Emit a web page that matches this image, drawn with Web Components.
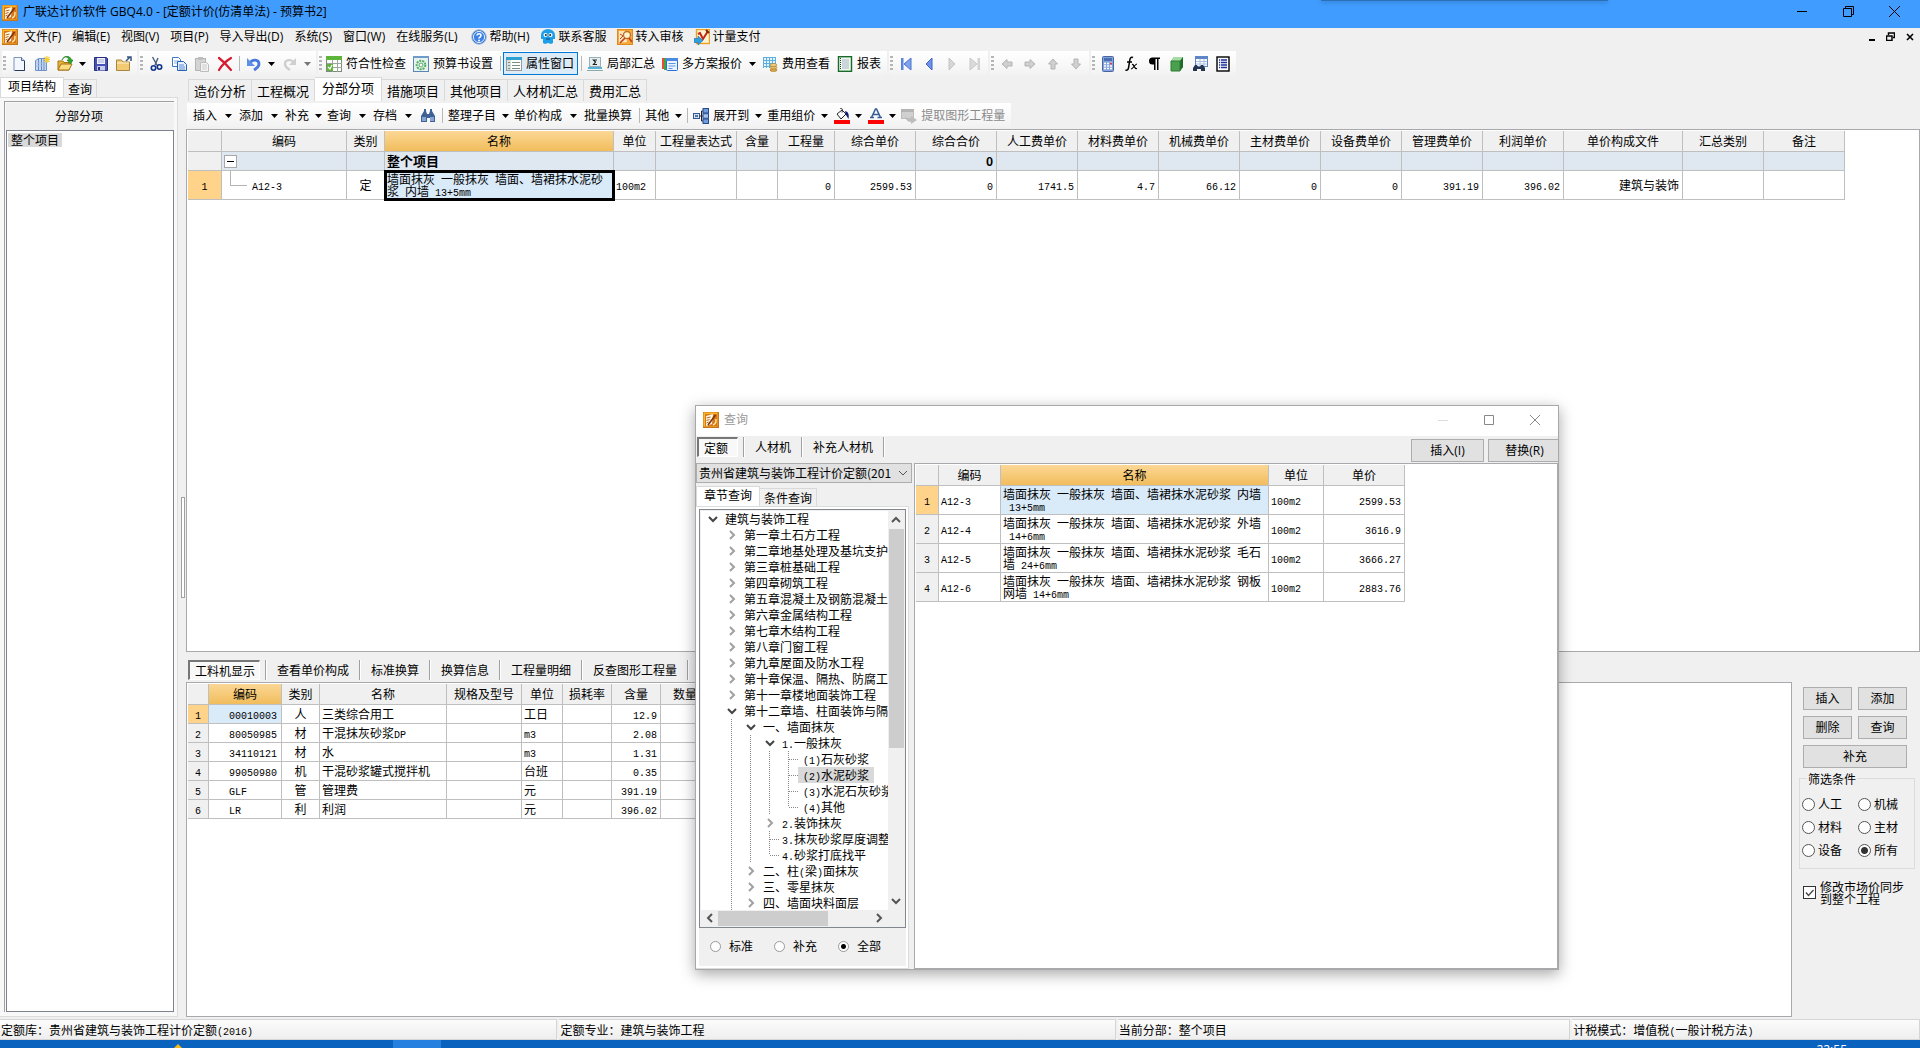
<!DOCTYPE html>
<html lang="zh-CN">
<head>
<meta charset="utf-8">
<title>广联达计价软件 GBQ4.0</title>
<style>
html,body{margin:0;height:100%;overflow:hidden}
body{font:12px/16px "Open Sans","Noto Sans CJK SC",sans-serif;color:#000;background:#f0f0f0}
</style>
</head>
<body>
<app-window></app-window>
<script>
const BASE = `
*{box-sizing:border-box}
:host{display:block}
:host([hidden]){display:none}
svg{display:block;flex:none}
button,select,input{font:inherit;color:inherit;margin:0}
.m{font-family:"Liberation Mono",monospace;font-size:10px;line-height:1px}
`;

/* Wraps runs of Latin characters so they take the narrow half-width face. */
const half = t => String(t).replace(/[&<>]/g, c => ({'&':'&amp;','<':'&lt;','>':'&gt;'}[c]))
  .replace(/[ -~\n]+/g, s => `<span class="m">${s}</span>`);

const define = (name, css, html, setup) => customElements.define(name, class extends HTMLElement {
  connectedCallback() {
    if (this.shadowRoot) return;
    const root = this.attachShadow({mode:'open'});
    const t = document.createElement('template');
    t.innerHTML = `<style>${BASE}${css}</style>` + (typeof html === 'function' ? html(this) : html);
    root.append(t.content.cloneNode(true));
    if (setup) setup(this, root);
  }
});

/* ---------- icons, 16 x 16 ---------- */
const ICONS = {
  app:'<rect x="0" y="0" width="16" height="16" fill="#c8741a"/><rect x="0.500" y="0.500" width="14" height="14" fill="#fbb829"/><rect x="2" y="2" width="12" height="12" fill="#d9761a"/><path d="M3 4l7-2-1 10-6 2z" fill="#fff8e6"/><path d="M3.500 6l4-1M3.500 8.500l3-1M3.500 11l2-1" stroke="#b4641c"/><path d="M5 13L12.500 3" stroke="#7c3408" stroke-width="1.500"/><path d="M10 13c3-1 3-3 3-6" stroke="#ffe9a8" stroke-width="1.400" fill="none"/>',
  help:'<circle cx="8" cy="8" r="7.3" fill="#2f6fd0" stroke="#a9bfe0"/><circle cx="8" cy="8" r="5.6" fill="#3c82e6" stroke="#e4eefc"/><path d="M6 6.6c0-2.6 4.2-2.4 4 0 0 1.500-2 1.400-2 3" stroke="#fff" stroke-width="1.600" fill="none"/><circle cx="8" cy="11.600" r="1" fill="#fff"/>',
  service:'<path d="M1 6a7 6 0 0 1 14 0v4h-2v4l-2 1-3-1-3 1-2-1v-4H1z" fill="#1f9fe8"/><circle cx="5.500" cy="6" r="2" fill="#fff"/><circle cx="10.500" cy="6" r="2" fill="#fff"/><circle cx="5.800" cy="6" r="1" fill="#123"/><circle cx="10.200" cy="6" r="1" fill="#123"/><path d="M6 10h4" stroke="#0b5f9c" stroke-width="1.300"/>',
  audit:'<rect x="0.500" y="0.500" width="15" height="15" fill="#f5a93a" stroke="#e08a1c"/><path d="M2 2h7l1 11-8 1z" fill="#fbe6bf"/><path d="M3 5l3 2-3 3" stroke="#c9401c" fill="none"/><circle cx="10" cy="6" r="3.500" fill="#fff1d0" stroke="#b9722a" stroke-width="1.300"/><path d="M8 9l-5 5M12 9l3 4" stroke="#c9401c" stroke-width="1.700"/>',
  pay:'<rect x="2.500" y="0.500" width="13" height="14" fill="#fff3d2" stroke="#f0a020" stroke-width="1.400"/><path d="M4 5l2-1 3 6 5-8" stroke="#c02818" stroke-width="2" fill="none"/><path d="M12 1l3 3" stroke="#7a2a10" stroke-width="2"/><path d="M0 9.500h4V7l5 4.500L4 16v-2.500H0z" fill="#2f9fdf" stroke="#1a6fae" stroke-width=".6"/>',
  file:'<path d="M3 1.500h7.500l3 3v10H3z" fill="#f3f8ff" stroke="#7d93b8"/><path d="M10.500 1.500v3h3" fill="#cfdcf0" stroke="#4f6894"/><path d="M13.500 5v9.500H4" stroke="#27395c" fill="none"/>',
  files:'<path d="M1.500 4.500l3-2h8v12h-11z" fill="#c6daf6" stroke="#6f93c8"/><path d="M4.500 3v11M7.500 3v11M10 3v11" stroke="#5f86c0"/><path d="M2 7h10M2 10h10" stroke="#a9c2e6"/><path d="M13 0v7M9.500 3.500H16M10.500 1l5 5M15.500 1l-5 5" stroke="#f2cd3c" stroke-width="1.200"/>',
  open:'<path d="M1 14V5h5l1 1.500h5V14z" fill="#e9b43a" stroke="#a67312"/><path d="M1 14l3-6h11l-3 6z" fill="#fbdc82" stroke="#a67312"/><path d="M5 4c2-4 6-4 7 0h-2l3.500 4L16 4h-1.500C13-1 7-1 5 4z" fill="#2ea82e" stroke="#137013" stroke-width=".6"/>',
  save:'<path d="M1.500 1.500h12l1 1v12h-13z" fill="#4a53b4" stroke="#272e80"/><rect x="4" y="2" width="8" height="6" fill="#eef0fb"/><path d="M5 4h6M5 6h6" stroke="#a9aed8"/><rect x="4" y="10" width="8" height="4.500" fill="#c8ccec"/><rect x="5" y="11" width="2" height="3" fill="#272e80"/>',
  folder:'<path d="M.5 14.500V4h5l1.500 2h6.500v8.500z" fill="#f0cb74" stroke="#a8873c"/><path d="M1 7h12" stroke="#fff3cd"/><path d="M10 5l4-4M11 1h4v4" stroke="#37527e" stroke-width="1.500" fill="none"/>',
  cut:'<path d="M4.500 1l5 9M10 2L7 9" stroke="#4b5d7e" stroke-width="1.400"/><circle cx="5.500" cy="12" r="2.200" fill="none" stroke="#10328c" stroke-width="1.600"/><circle cx="11.500" cy="11" r="2.200" fill="none" stroke="#10328c" stroke-width="1.600"/>',
  copy:'<path d="M1.500 1.500h6l2 2v7h-8z" fill="#fff" stroke="#3d78c4"/><path d="M3 5h5M3 7h5" stroke="#8fb2e2"/><path d="M6.500 5.500h6l3 3v6h-9z" fill="#e6f0ff" stroke="#2462b4"/><path d="M8 9h5M8 11h6M8 13h6" stroke="#5c8fd4"/>',
  paste:'<rect x="1.500" y="2.500" width="10" height="12" fill="#d4d4d4" stroke="#b4b4b4"/><rect x="4" y="1" width="5" height="3" fill="#bdbdbd"/><path d="M6.500 6.500h6l2 2v7h-8z" fill="#f4f4f4" stroke="#bcbcbc"/><path d="M8 9h5M8 11h5M8 13h5" stroke="#ccc"/>',
  del:'<path d="M2 2c4 3 8 7 12 12M14 2C9 5 5 9 2 14" stroke="#d61a30" stroke-width="2.200" fill="none" stroke-linecap="round"/>',
  undo:'<path d="M4 7c2-4 9-4 9 1 0 3-2 4-5 6" stroke="#4a7bdc" stroke-width="2.800" fill="none"/><path d="M1 2v8h8z" fill="#5e90ea"/>',
  redo:'<path d="M12 7c-2-4-9-4-9 1 0 3 2 4 5 6" stroke="#cfcfcf" stroke-width="2.400" fill="none"/><path d="M14 2v7H7z" fill="#cfcfcf"/>',
  check:'<rect x="0.500" y="0.500" width="15" height="15" fill="#fff" stroke="#7c8a7c"/><rect x="0" y="0" width="16" height="4" fill="#5fb53a"/><path d="M1 7.500h15M1 11.500h15M6.500 4v12M11.500 4v12" stroke="#9aa79a"/><rect x="1" y="8" width="6" height="7" fill="#5fb53a"/><path d="M2 11l2 2 2-4" stroke="#fff" fill="none" stroke-width="1.200"/>',
  gear:'<rect x="0.500" y="0.500" width="15" height="15" fill="#e6f3ea" stroke="#5c86b8"/><rect x="0" y="0" width="16" height="2" fill="#6f9bcc"/><circle cx="8" cy="9" r="4.300" fill="none" stroke="#54a868" stroke-width="2" stroke-dasharray="2 1"/><circle cx="8" cy="9" r="2" fill="#fff" stroke="#54a868"/>',
  props:'<rect x="0.500" y="1.500" width="15" height="13" fill="#fff" stroke="#9a9a9a"/><rect x="0" y="1" width="16" height="3" fill="#2f9fcf"/><rect x="1" y="4" width="4" height="10" fill="#d6e2da"/><path d="M2 6.500h2M2 9.500h2M2 12.500h2M6 6.500h8M6 9.500h8M6 12.500h8" stroke="#7b8f86"/>',
  sum:'<rect x="2.500" y="1.500" width="11" height="9" fill="#e4eef0" stroke="#9ab0b8"/><path d="M10 4H6.500L8.500 6 6.500 8.500H10" stroke="#222" fill="none" stroke-width="1.200"/><path d="M1 11h14v2H1z" fill="#58b2d8"/><path d="M0 14.500h16" stroke="#8aa"/>',
  plans:'<path d="M0 2h3v11H0z" fill="#e94b3c"/><path d="M2 2h3v12H2z" fill="#3aa84a"/><rect x="4.500" y="2.500" width="11" height="12" rx="1" fill="#eaf3ff" stroke="#2a6cd0"/><rect x="4" y="2" width="12" height="3" fill="#4c8ae2"/><path d="M6.500 7.500h7M6.500 10h7M6.500 12.500h4" stroke="#5c94e0"/>',
  cost:'<rect x="1" y="1" width="13" height="11" fill="#e6f3fc"/><path d="M1 1.500h13M1 4.500h13M1 7.500h13M1 10.500h13M1.500 1v11M4.500 1v11M7.500 1v11M10.500 1v11M13.500 1v11" stroke="#5eb0de"/><ellipse cx="11.500" cy="14" rx="3.500" ry="1.500" fill="#d9a548" stroke="#a87a28" stroke-width=".6"/><ellipse cx="11.500" cy="11.500" rx="3.500" ry="1.500" fill="#e7bd66" stroke="#a87a28" stroke-width=".6"/><ellipse cx="11.500" cy="9" rx="3.500" ry="1.500" fill="#f0cf86" stroke="#a87a28" stroke-width=".6"/>',
  report:'<rect x="1.500" y="0.700" width="13" height="14.600" fill="#eef6ee" stroke="#186a2a" stroke-width="1.400"/><path d="M5 4h7M5 6h7M5 8h7M5 10h7M5 12h7" stroke="#a6b8c6"/><path d="M3.500 2v12" stroke="#333" stroke-dasharray="1 1"/>',
  first:'<rect x="3" y="2" width="2.500" height="12" fill="#5b84e0"/><path d="M13 2v12L6 8z" fill="#7ea2f0" stroke="#4a70cc"/>',
  prev:'<path d="M11 2v12L5 8z" fill="#6d93ea" stroke="#3f66c4"/>',
  next:'<path d="M5 2v12l6-6z" fill="#d6d6d6" stroke="#c4c4c4"/>',
  last:'<rect x="10.500" y="2" width="2.500" height="12" fill="#d2d2d2"/><path d="M3 2v12l7-6z" fill="#dadada" stroke="#c8c8c8"/>',
  left:'<path d="M3 8l5-4.500V6h5v4H8v2.500z" fill="#d0d0d0" stroke="#b4b4b4"/>',
  right:'<path d="M13 8L8 3.500V6H3v4h5v2.500z" fill="#d0d0d0" stroke="#b4b4b4"/>',
  up:'<path d="M8 3l4.500 5H10v5H6V8H3.500z" fill="#d0d0d0" stroke="#b4b4b4"/>',
  down:'<path d="M8 13l4.500-5H10V3H6v5H3.500z" fill="#d0d0d0" stroke="#b4b4b4"/>',
  calc:'<rect x="2.500" y="0.500" width="11" height="15" rx="1" fill="#86a4dc" stroke="#4a649c"/><rect x="4" y="2" width="8" height="3" fill="#4a6cb0"/><path d="M4 7.500h8M4 10h8M4 12.500h8" stroke="#fff" stroke-width="1.500" stroke-dasharray="2 1"/><rect x="10" y="7" width="2" height="1.500" fill="#e03838"/>',
  fx:'<path d="M10 1.500c-2-1-3 .5-3.300 3L5.500 12c-.4 2-1.500 2.500-3 2M4 6h5" stroke="#000" stroke-width="1.500" fill="none"/><path d="M9 8.500c2-1 2 5 5 4M14 8c-2 0-4 5-6 5" stroke="#000" stroke-width="1.200" fill="none"/>',
  para:'<path d="M14 1.500H6.500a3.500 3.500 0 0 0 0 7H8V14h1.500V3H11v11h1.500V3H14z" fill="#000"/>',
  cube:'<path d="M2 5l3-4h9v10l-3 4H2z" fill="#4ba04e"/><path d="M2 5l3-4h9l-3 4z" fill="#a6dba4"/><path d="M11 5l3-4v10l-3 4z" fill="#1f6b28"/><path d="M2 5h9v10H2z" fill="none" stroke="#2c7c34"/>',
  findgrid:'<rect x="3.500" y="0.500" width="12" height="10" fill="#fff" stroke="#5e86c6"/><rect x="3" y="0" width="13" height="3" fill="#5e86c6"/><path d="M4 5.500h11M4 8h11M8 3v7M12 3v7" stroke="#a8c0e2"/><path d="M1 15v-3l2-3h2l1 2h2l1-2h2l2 3v3H9v-2H5v2z" fill="#22344e"/>',
  list:'<rect x="2" y="1" width="12" height="14" fill="#fff" stroke="#000" stroke-width="1.400"/><path d="M4 4h8M4 6.500h8M4 9h8M4 11.500h8" stroke="#1e2f9c" stroke-width="1.400"/><path d="M5.500 2v12" stroke="#fff" stroke-width=".8"/>',
  find:'<path d="M1 14V8l3-5V1h2v2l1 3h2l1-3V1h2v2l3 5v6h-5v-4H7v4z" fill="#3f6296"/><path d="M2 9h4v4H2zM10 9h4v4h-4z" fill="#86a6d2"/>',
  expand:'<rect x="0.500" y="5.500" width="6" height="5" fill="#dde9fa" stroke="#35578f"/><path d="M2 7l3 2M5 7L2 9" stroke="#35578f"/><path d="M7 8h3M8.500 3v10M8.500 3H10M8.500 13H10" stroke="#222" fill="none"/><rect x="10" y="0.500" width="5.500" height="4.500" fill="#6f9be0" stroke="#27488a"/><rect x="10" y="5.700" width="5.500" height="4.500" fill="#a6c3f0" stroke="#27488a"/><rect x="10" y="11" width="5.500" height="4.500" fill="#6f9be0" stroke="#27488a"/>',
  fill:'<path d="M3 6l5-4 4 4-5 5z" fill="#fff" stroke="#222"/><path d="M6 0.500c2-1 3 1 2 4" stroke="#222" fill="none"/><path d="M11 3c4 1 4 4 3.500 8L12 7z" fill="#101c7a"/><rect x="0" y="12" width="16" height="4" fill="#f00"/>',
  color:'<path d="M3.500 9.500L7.500 1h1l4 8.500M5 6.500h6M2 9.500h4M9.500 9.500h4.500" stroke="#3a5d96" stroke-width="1.600" fill="none"/><rect x="0" y="12" width="16" height="4" fill="#f00"/>',
  extract:'<rect x="0.500" y="1.500" width="12" height="9" fill="#d0d0d0" stroke="#bcbcbc"/><rect x="0" y="1" width="13" height="3" fill="#b4b4b4"/><path d="M4 7c1 3 3 4 6 4V8l6 4-6 4v-2c-4 0-6-3-6-7z" fill="#bdbdbd"/>'
};
define('ui-icon', ':host{width:16px;height:16px;flex:none}',
  h => `<svg width="16" height="16" viewBox="0 0 16 16" aria-hidden="true">${ICONS[h.getAttribute('name')]}</svg>`);

/* ---------- title bar and menus ---------- */
define('title-bar', `
:host{display:flex;align-items:center;height:28px;background:#409dff;padding:0 3px 6px 2px;position:relative;flex:none}
h1{font:inherit;margin:0 0 0 5px;flex:1;padding-top:2px}
ui-icon{margin-top:3px}
.flap{position:absolute;right:312px;top:0;width:287px;height:1px;background:#2c6fb4;box-shadow:0 1px 4px #1c4f8a}
button{width:46px;height:22px;border:0;background:none;padding:0;display:grid;place-items:center}`,
`<ui-icon name="app"></ui-icon><h1>广联达计价软件 GBQ4.0 - [定额计价(仿清单法) - 预算书2]</h1><div class="flap"></div>
<button aria-label="最小化"><svg width="10" height="10"><path d="M0 5.500h10" stroke="#000"/></svg></button>
<button aria-label="还原"><svg width="11" height="11"><path d="M.5 2.500h8v8h-8zM2.500 2.500v-2h8v8h-2" fill="none" stroke="#000"/></svg></button>
<button aria-label="关闭"><svg width="11" height="11"><path d="M0 0l11 11M11 0L0 11" stroke="#000"/></svg></button>`);

define('menu-bar', `
:host{display:flex;align-items:center;height:24px;padding:0 1px 7px 2px;flex:none}
nav{display:flex;flex:1;align-items:center;margin-left:1px}
button{border:0;background:none;padding:0 6px 0 5px;display:flex;align-items:center;gap:3px;white-space:nowrap;height:16px}
button.i{padding:0 3px 0 7px}
button.w{padding:0;width:19px;justify-content:center}`,
`<ui-icon name="app"></ui-icon><nav>${[['文件(F)'],['编辑(E)'],['视图(V)'],['项目(P)'],['导入导出(D)'],['系统(S)'],['窗口(W)'],['在线服务(L)'],['帮助(H)','help'],['联系客服','service'],['转入审核','audit'],['计量支付','pay']]
 .map(([t,i]) => `<button class="${i?'i':''}">${i?`<ui-icon name="${i}"></ui-icon>`:''}${t}</button>`).join('')}</nav>
<button class="w" aria-label="最小化窗口"><svg width="8" height="9"><path d="M1 8h6" stroke="#000" stroke-width="2"/></svg></button>
<button class="w" aria-label="还原窗口"><svg width="9" height="9"><path d="M0 4h6v4.500H.5V4M2.500 3V1h6v4.500H7" fill="none" stroke="#000" stroke-width="1.500"/></svg></button>
<button class="w" aria-label="关闭窗口"><svg width="8" height="8"><path d="M1 1l6 6M7 1L1 7" stroke="#000" stroke-width="1.600"/></svg></button>`);

/* ---------- toolbars ---------- */
define('tool-item', `
:host{display:flex;height:23px;align-items:center;flex:none}
button{display:flex;align-items:center;gap:4px;height:23px;border:0;background:none;padding:0 4px 0 3px;white-space:nowrap}
button.icon{width:23px;padding:0;justify-content:center}
button.on{border:1px solid #0078d7;background:#dcebf8;padding:0 3px 0 2px}
:host([off]) button{color:#8b8b8b}
.a{width:13px;padding:0;justify-content:center}
.a.wide{width:15px}
.a.tight{width:11px}`,
h => {
  const i = h.getAttribute('icon'), t = h.textContent.trim(), a = h.getAttribute('arrow');
  return `<button class="${t?'':'icon'} ${h.hasAttribute('pressed')?'on':''}" aria-label="${t||i}">${i?`<ui-icon name="${i}"></ui-icon>`:''}${t?`<span>${t}</span>`:''}</button>` +
  (a!==null?`<button class="a ${a}" aria-label="展开"><svg width="7" height="4"><path d="M0 0h7L3.500 4z" fill="${i==='redo'?'#777':'#000'}"/></svg></button>`:'');
});
define('tool-strip', `
:host{display:flex;align-items:center;height:25px;background:linear-gradient(#fff,#f6f6f6 70%,#f1f1f1);padding-right:2px;flex:none}
i{width:3px;height:15px;margin:0 1px;background:repeating-linear-gradient(#b4b4b4 0 2px,transparent 2px 4px)}
:host([plain]) i{display:none}`, '<i></i><slot></slot>');
define('tool-sep', ':host{width:1px;height:15px;background:#b8b8b8;margin:0 2px 0 3px;flex:none}', '');

/* ---------- page tabs and flat tabs ---------- */
define('page-tabs', `
:host{display:flex;align-items:flex-end;height:24px;font-family:"Noto Sans CJK SC",sans-serif;position:relative;z-index:1;flex:none}
button{height:22px;border:1px solid #d9d9d9;border-width:1px 1px 0 0;background:#f0f0f0;padding:0 5px;white-space:nowrap}
button:first-of-type{border-left-width:1px}
button[aria-selected=true]{height:24px;background:#fff;padding:0 7px 3px}
:host([large]) button{font-size:13px}
:host([small]){height:20px}
:host([small]) button{height:18px;line-height:14px;padding:0 4px}
:host([small]) button[aria-selected=true]{height:20px;padding:0 7px 4px}`,
h => { const s = h.getAttribute('selected');
  return h.getAttribute('items').split(',').map(t => `<button role="tab" aria-selected="${t===s}">${t}</button>`).join(''); });
define('flat-tabs', `
:host{display:flex;height:20px;font-family:"Noto Sans CJK SC",sans-serif;flex:none}
button{border:0;background:none;padding:0 10px 0 11px;white-space:nowrap;border-right:1px solid #a0a0a0;box-shadow:1px 0 #fff;height:20px}
button:first-of-type{border:2px solid #777;border-width:2px 1px 1px 2px;border-right-color:#fff;border-bottom-color:#fff;background:#f8f8f8;padding:0 4px 0 5px;margin-right:5px;min-width:41px;text-align:left;box-shadow:none;line-height:17px}
i{width:1px;background:#a0a0a0;box-shadow:1px 0 #fff}`,
h => { const [a,...r] = h.getAttribute('items').split(',');
  return `<button role="tab" aria-selected="true">${a}</button><i></i>` + r.map(t => `<button role="tab">${t}</button>`).join(''); });

/* ---------- data grid ---------- */
const GRIDS = {
  main:{
    widths:[34,125,38,229,42,81,41,57,81,81,81,81,81,81,81,81,81,119,81,81], hot:3,
    head:['','编码','类别','名称','单位','工程量表达式','含量','工程量','综合单价','综合合价','人工费单价','材料费单价','机械费单价','主材费单价','设备费单价','管理费单价','利润单价','单价构成文件','汇总类别','备注'],
    rows:[
      {cls:'sum', cells:['','@box','','整个项目','','','','','','0','','','','','','','','','','']},
      {cls:'tall', now:true, cells:['1','@leafA12-3','定','墙面抹灰 一般抹灰 墙面、墙裙抹水泥砂浆 内墙 13+5mm','100m2','','','0','2599.53','0','1741.5','4.7','66.12','0','0','391.19','396.02','建筑与装饰','','']}],
    align:['c','l','c','l','l','l','l','r','r','r','r','r','r','r','r','r','r','r','l','l'], sel:'box'
  },
  parts:{
    widths:[21,73,38,127,75,41,49,49,49], hot:1,
    head:['','编码','类别','名称','规格及型号','单位','损耗率','含量','数量'],
    rows:[['00010003','人','三类综合用工','','工日','','12.9'],['80050985','材','干混抹灰砂浆DP','','m3','','2.08'],['34110121','材','水','','m3','','1.31'],['99050980','机','干混砂浆罐式搅拌机','','台班','','0.35'],['GLF','管','管理费','','元','','391.19'],['LR','利','利润','','元','','396.02']]
      .map((r,i) => ({now:!i, cells:[i+1,...r,'']})),
    align:['c','in','c','l','l','l','l','r','r'], sel:'soft'
  },
  query:{
    widths:[23,62,268,55,81], hot:2, head:['','编码','名称','单位','单价'],
    rows:[['A12-3','内墙\n 13+5mm','2599.53'],['A12-4','外墙\n 14+6mm','3616.9'],['A12-5','毛石墙 24+6mm','3666.27'],['A12-6','钢板网墙 14+6mm','2883.76']]
      .map((r,i) => ({cls:'tall', now:!i, cells:[i+1,r[0],'墙面抹灰 一般抹灰 墙面、墙裙抹水泥砂浆 '+r[1],'100m2',r[2]]})),
    align:['c','l','l','l','r'], sel:'soft'
  }
};
define('data-grid', `
:host{border:1px solid #a9a9ad;background:#fff;padding:1px 0 0 1px;overflow:hidden;font-family:"Noto Sans CJK SC",sans-serif;min-width:0;min-height:0}
table{border-collapse:separate;border-spacing:0;table-layout:fixed}
th,td{padding:0 2px;border:1px solid #bfbfbf;border-width:0 1px 1px 0;font-weight:400;overflow:hidden;white-space:nowrap;line-height:12px}
th{height:21px;background:#f0f0f0;padding:0}
th.hot{background:linear-gradient(#fbd795,#f1bd5c)}
td{height:19px}
td.c{text-align:center}td.r{text-align:right;padding-right:3px}td.in{padding-left:20px}
tr.tall td{height:29px}
tr.sum td{background:#dfe7f1;font-weight:700;font-size:13px}
tr.sum .m{font-family:"Noto Sans CJK SC",sans-serif;font-size:12px}
td:first-child,tr.sum td:first-child{background:#f0f0f0}
tr.now td:first-child{background:#ffd38a}
td.text{white-space:pre-wrap}
td.soft,td.box{background:#d9eaf9}
td.box{outline:3px solid #000;outline-offset:-2px;overflow:visible;position:relative}
.toggle{display:block;width:13px;height:13px;border:1px solid #a8a8a8;background:linear-gradient(#000,#000) center/7px 1px no-repeat #fff;padding:0}
.leaf{display:flex;height:28px;gap:5px;align-items:center}
.leaf i{width:17px;height:15px;margin-left:6px;align-self:flex-start;border:1px solid #b4b4b4;border-width:0 0 1px 1px}`,
h => { const g = GRIDS[h.getAttribute('data')];
  const cell = (v,c,r) => {
    let k = g.align[c], body = half(v);
    if (v==='@box') body = '<button class="toggle" aria-label="折叠"></button>';
    else if (String(v).startsWith('@leaf')) body = `<div class="leaf"><i></i><span>${half(v.slice(5))}</span></div>`;
    if (c===g.hot) { if (r.cls==='tall') k += ' text'; if (r.now) k += ' '+g.sel; }
    return `<td class="${k}">${body}</td>`; };
  return `<table style="width:${g.widths.reduce((a,b)=>a+b)}px"><colgroup>${g.widths.map(w=>`<col style="width:${w}px">`).join('')}</colgroup>
  <thead><tr>${g.head.map((t,i)=>`<th class="${i===g.hot?'hot':''}">${t}</th>`).join('')}</tr></thead>
  <tbody>${g.rows.map(r=>`<tr class="${r.cls||''} ${r.now?'now':''}">${r.cells.map((v,c)=>cell(v,c,r)).join('')}</tr>`).join('')}</tbody></table>`; });

/* ---------- left project panel ---------- */
define('project-panel', `
:host{display:flex;flex-direction:column;width:178px;flex:none}
.frame{flex:1;min-height:0;border:1px solid #dcdcdc;border-left:0;background:#f8f8f8;padding:3px 3px 4px 4px;display:flex;flex-direction:column}
.in{flex:1;border:1px solid #a0a0a0;border-width:1px 0 0 1px;padding:1px 0 0 1px;display:flex;flex-direction:column;background:#f8f8f8}
h2{font:inherit;margin:0;height:27px;line-height:27px;text-align:center;background:#f0f0f0;padding-right:22px}
.list{flex:1;background:#fff;border:1px solid #7d828c;padding:1px;font-family:"Noto Sans CJK SC",sans-serif}
.list span{display:inline-block;background:#d9d9d9;padding:0 3px;line-height:14px}`,
`<page-tabs small items="项目结构,查询" selected="项目结构"></page-tabs>
<div class="frame"><div class="in"><h2>分部分项</h2><div class="list"><span>整个项目</span></div></div></div>`);

/* ---------- filter panel on the right ---------- */
const RADIO = `
input[type=radio]{appearance:none;width:13px;height:13px;border:1px solid #555;border-radius:50%;background:#fff;flex:none}
input[type=radio]:checked{background:radial-gradient(circle,#333 0 3px,#fff 4px)}
label{display:flex;align-items:center}`;
define('filter-panel', RADIO + `
:host{width:128px;flex:none;padding:5px 5px 0 7px;font-family:"Noto Sans CJK SC",sans-serif}
.b{display:grid;grid-template-columns:1fr 1fr;gap:6px;padding:0 8px 0 4px}
button{height:23px;border:1px solid #adadad;background:#e1e1e1;padding:0;line-height:18px}
.b :last-child{grid-column:1/3}
fieldset{margin:3px 0 0;border:1px solid #dcdcdc;padding:9px 0 10px 2px;display:grid;grid-template-columns:56px 1fr;row-gap:6px;height:98px;align-content:start}
legend{padding:0 1px;margin-left:5px}
fieldset label{gap:3px;height:17px}
.s{margin:12px 0 0 4px;gap:4px;line-height:12px}
input[type=checkbox]{appearance:none;width:13px;height:13px;border:1px solid #333;background:#fff;flex:none}
.tick{display:grid;flex:none}.tick>*{grid-area:1/1}.tick svg{pointer-events:none;z-index:1}`,
`<div class="b"><button>插入</button><button>添加</button><button>删除</button><button>查询</button><button>补充</button></div>
<fieldset><legend>筛选条件</legend>${['人工','机械','材料','主材','设备','所有'].map(t=>`<label><input type="radio" name="f" ${t==='所有'?'checked':''}>${t}</label>`).join('')}</fieldset>
<label class="s"><span class="tick"><input type="checkbox" checked><svg width="13" height="13"><path d="M3 6.500l2.500 3L10.500 4" fill="none" stroke="#444" stroke-width="1.300"/></svg></span><span>修改市场价同步<br>到整个工程</span></label>`);

/* ---------- chapter tree ---------- */
const TREE = [[0,'v','建筑与装饰工程'],[1,'>','第一章土石方工程'],[1,'>','第二章地基处理及基坑支护'],[1,'>','第三章桩基础工程'],[1,'>','第四章砌筑工程'],[1,'>','第五章混凝土及钢筋混凝土'],[1,'>','第六章金属结构工程'],[1,'>','第七章木结构工程'],[1,'>','第八章门窗工程'],[1,'>','第九章屋面及防水工程'],[1,'>','第十章保温、隔热、防腐工'],[1,'>','第十一章楼地面装饰工程'],[1,'v','第十二章墙、柱面装饰与隔'],[2,'v','一、墙面抹灰'],[3,'v','1.一般抹灰'],[4,'-','(1)石灰砂浆'],[4,'*','(2)水泥砂浆'],[4,'-','(3)水泥石灰砂浆'],[4,'L','(4)其他'],[3,'>','2.装饰抹灰'],[3,'-','3.抹灰砂浆厚度调整'],[3,'L','4.砂浆打底找平'],[2,'>','二、柱(梁)面抹灰'],[2,'>','三、零星抹灰'],[2,'>','四、墙面块料面层']];
const chev = (d,c='#555',w=2) => `<svg width="10" height="10"><path d="${{v:'M1 3l4 4 4-4','^':'M1 7l4-4 4 4','>':'M3 1l4 4-4 4','<':'M7 1L3 5l4 4'}[d]}" fill="none" stroke="${c}" stroke-width="${w}"/></svg>`;
define('chapter-tree', `
:host{display:grid;grid-template:minmax(0,1fr) 16px/minmax(0,1fr) 16px;border:1px solid #82868f;background:#f0f0f0;padding:1px;font-family:"Noto Sans CJK SC",sans-serif;overflow:hidden;min-height:0}
ul{margin:0;padding:0 0 0 2px;list-style:none;background:#fff;overflow:hidden}
li{display:flex;height:16px;line-height:16px;white-space:nowrap;align-items:center}
.g{width:19px;height:16px;flex:none;display:flex;align-items:center;justify-content:center}
.dot{background:repeating-linear-gradient(#888 0 1px,transparent 1px 2px) 9px 0/1px 100% no-repeat}
.h::after{content:"";width:9px;height:1px;margin-left:10px;background:repeating-linear-gradient(90deg,#888 0 1px,transparent 1px 2px)}
.end{background-size:1px 8px}
.t{padding:0 3px}
.d4 .t{padding:0 5px}
.t.sel{background:#d9d9d9}
.v,.x{display:flex;align-items:center;justify-content:space-between}
.v{flex-direction:column;padding:4px 0}.v i{width:15px;height:219px;background:#cdcdcd;margin:4px 0 auto}
.x{padding:0 4px}.x i{height:15px;width:110px;background:#cdcdcd;margin:0 auto 0 3px}`,
`<ul role="tree">${TREE.map(([d,k,t],n) => {
  let s = '';
  for (let j=0;j<d;j++) s += `<span class="g ${(j===1&&n>12)||(j===2&&n>13&&n<22)||(j===3&&n>14&&n<19)?'dot':''}"></span>`;
  s += k==='v'||k==='>' ? `<span class="g">${chev(k,k==='v'?'#444':'#a0a0a0')}</span>` : `<span class="g h dot ${k==='L'?'end':''}"></span>`;
  return `<li role="treeitem" class="d${d}">${s}<span class="t ${k==='*'?'sel':''}">${half(t)}</span></li>`; }).join('')}</ul>
<div class="v">${chev('^')}<i></i>${chev('v')}</div><div class="x">${chev('<')}<i></i>${chev('>')}</div>`);

/* ---------- query window ---------- */
define('query-window', RADIO + `
:host{display:flex;flex-direction:column;background:#f0f0f0;border:1px solid #a8a8a8;box-shadow:0 4px 14px rgba(0,0,0,.35);overflow:hidden}
header{height:30px;background:#fff;display:flex;align-items:center;padding:0 0 2px 7px;flex:none;color:#999}
header span{flex:1;margin-left:5px}
header button{width:46px;border:0;background:none;display:grid;place-items:center;padding:0}
.bar{display:flex;height:27px;padding:1px 0 0 1px;flex:none}
.acts{display:flex;gap:4px;margin-left:auto;margin-right:-3px;padding-top:2px}
.acts button{width:73px;height:23px;border:1px solid #adadad;background:#e1e1e1;padding:0}
.body{flex:1;display:flex;min-height:0}
.side{width:216px;margin-right:2px;display:flex;flex-direction:column;flex:none}
select{appearance:none;width:216px;height:20px;border:1px solid #adadad;border-radius:0;background:#e1e1e1;padding:0 20px 0 2px;font-family:"Noto Sans CJK SC",sans-serif;line-height:18px}
.sel{display:grid;margin-bottom:3px}.sel>*{grid-area:1/1}.sel svg{justify-self:end;align-self:center;margin-right:4px;pointer-events:none}
.page{flex:1;min-height:0;width:213px;border:1px solid #dcdcdc;border-left:0;background:#fff;padding:2px 2px 2px 3px;display:flex;flex-direction:column}
chapter-tree{flex:1}
.r{height:38px;background:#f0f0f0;display:flex;gap:19px;align-items:center;padding:0 0 2px 11px;flex:none;font-family:"Noto Sans CJK SC",sans-serif}
.r label{gap:8px;width:45px;white-space:nowrap}
.r input[type=radio]{width:11px;height:11px;border-color:#999}
.r input[type=radio]:checked{background:radial-gradient(circle,#000 0 2px,#fff 3px)}
data-grid{flex:1}`,
`<header><ui-icon name="app"></ui-icon><span>查询</span>
<button aria-label="最小化"><svg width="10" height="10"><path d="M0 5.500h10" stroke="#ddd"/></svg></button>
<button aria-label="最大化"><svg width="10" height="10"><path d="M.5.500h9v9h-9z" fill="none" stroke="#888"/></svg></button>
<button aria-label="关闭"><svg width="10" height="10"><path d="M0 0l10 10M10 0L0 10" stroke="#888"/></svg></button></header>
<div class="bar"><flat-tabs items="定额,人材机,补充人材机"></flat-tabs><div class="acts"><button>插入(I)</button><button>替换(R)</button></div></div>
<div class="body"><div class="side"><div class="sel"><select aria-label="定额库"><option>贵州省建筑与装饰工程计价定额(201</option></select>${chev('v','#555',1)}</div>
<page-tabs small items="章节查询,条件查询" selected="章节查询"></page-tabs>
<div class="page"><chapter-tree></chapter-tree><div class="r">${['标准','补充','全部'].map(t=>`<label><input type="radio" name="q" ${t==='全部'?'checked':''}>${t}</label>`).join('')}</div></div></div>
<data-grid data="query"></data-grid></div>`);

/* ---------- status bar and taskbar ---------- */
define('status-bar', `
:host{display:grid;grid-template-columns:558fr 557fr 453fr 348fr;gap:2px;height:21px;flex:none;font-family:"Noto Sans CJK SC",sans-serif}
div{border:1px solid #d5d5d5;border-left-width:0;background:linear-gradient(#fcfcfc,#eee);padding:0 1px;line-height:19px;white-space:nowrap;overflow:hidden}`,
['定额库：贵州省建筑与装饰工程计价定额(2016)','定额专业：建筑与装饰工程','当前分部：整个项目','计税模式：增值税(一般计税方法)'].map(t=>`<div>${half(t)}</div>`).join(''));
define('task-bar', `
:host{display:flex;height:8px;flex:none;background:#0a62bf;overflow:hidden;color:#fff;line-height:16px;align-items:flex-start}
svg{margin-left:172px}
i{width:48px;height:8px;background:#2580e0;margin-left:209px}
span{margin-left:auto;margin-right:73px;padding-top:2px}`,
'<svg width="12" height="8"><path d="M6 4l4 4H2z" fill="#f2b91c"/></svg><i></i><span>22:55</span>');

/* ---------- whole window ---------- */
const B = (i,a) => `<tool-item icon="${i}" ${a!==undefined?`arrow="${a}"`:''}></tool-item>`;
const T = (t,a,i,x='') => `<tool-item ${i?`icon="${i}"`:''} ${a!==undefined&&a!==null?`arrow="${a}"`:''} ${x}>${t}</tool-item>`;
define('app-window', `
:host{display:flex;flex-direction:column;height:100vh;position:relative;overflow:hidden}
.tools{display:flex;gap:2px;padding:0 0 0 2px;height:25px;flex:none;margin-top:-1px}
.work{flex:1;display:flex;min-height:0;padding-bottom:2px;padding-top:1px}
.grip{width:8px;flex:none;display:flex;align-items:center;padding-left:3px}
.grip i{width:4px;height:101px;border:1px solid #a0a0a0;background:#fff}
.main{flex:1;min-width:0;display:flex;flex-direction:column}
.main page-tabs{margin-left:2px}
.row{display:flex;margin:2px 0 1px 1px}
.top{flex:522 1 0}
.low{flex:367 1 0;display:flex;flex-direction:column;min-height:0}
flat-tabs{margin:8px 0 2px 2px}
.split{flex:1;display:flex;min-height:0}
.split data-grid{flex:1}
query-window{position:absolute;left:695px;top:405px;width:864px;height:565px;z-index:5}`,
`<title-bar></title-bar><menu-bar></menu-bar>
<div class="tools">
<tool-strip>${B('file')+B('files')+B('open','')+B('save')+B('folder')}</tool-strip>
<tool-strip>${B('cut')+B('copy')+B('paste')+B('del')}<tool-sep></tool-sep>${B('undo','')+B('redo','')}</tool-strip>
<tool-strip>${T('符合性检查',null,'check')+T('预算书设置',null,'gear')}<tool-sep></tool-sep>${T('属性窗口',null,'props','pressed')}<tool-sep></tool-sep>${T('局部汇总',null,'sum')+T('多方案报价','','plans')+T('费用查看',null,'cost')+T('报表',null,'report')}</tool-strip>
<tool-strip>${['first','prev','next','last'].map(n=>B(n)).join('')}</tool-strip>
<tool-strip>${['left','right','up','down'].map(n=>B(n)).join('')}</tool-strip>
<tool-strip>${['calc','fx','para','cube','findgrid','list'].map(n=>B(n)).join('')}</tool-strip>
</div>
<div class="work"><project-panel></project-panel><div class="grip"><i></i></div>
<div class="main"><page-tabs large items="造价分析,工程概况,分部分项,措施项目,其他项目,人材机汇总,费用汇总" selected="分部分项"></page-tabs>
<div class="row"><tool-strip plain><span style="width:3px"></span>${T('插入','wide')+T('添加','wide')+T('补充','tight')+T('查询','wide')+T('存档','wide')+B('find')}<tool-sep></tool-sep>${T('整理子目','tight')+T('单价构成','wide')+T('批量换算')}<tool-sep></tool-sep>${T('其他','tight')}<tool-sep></tool-sep>${T('展开到','tight','expand')+T('重用组价','tight')+B('fill','tight')+B('color','tight')+T('提取图形工程量',null,'extract','off')}</tool-strip></div>
<data-grid class="top" data="main"></data-grid>
<div class="low"><flat-tabs items="工料机显示,查看单价构成,标准换算,换算信息,工程量明细,反查图形工程量"></flat-tabs>
<div class="split"><data-grid data="parts"></data-grid><filter-panel></filter-panel></div></div>
</div></div>
<status-bar></status-bar><task-bar></task-bar><query-window></query-window>`);
</script>
</body>
</html>
